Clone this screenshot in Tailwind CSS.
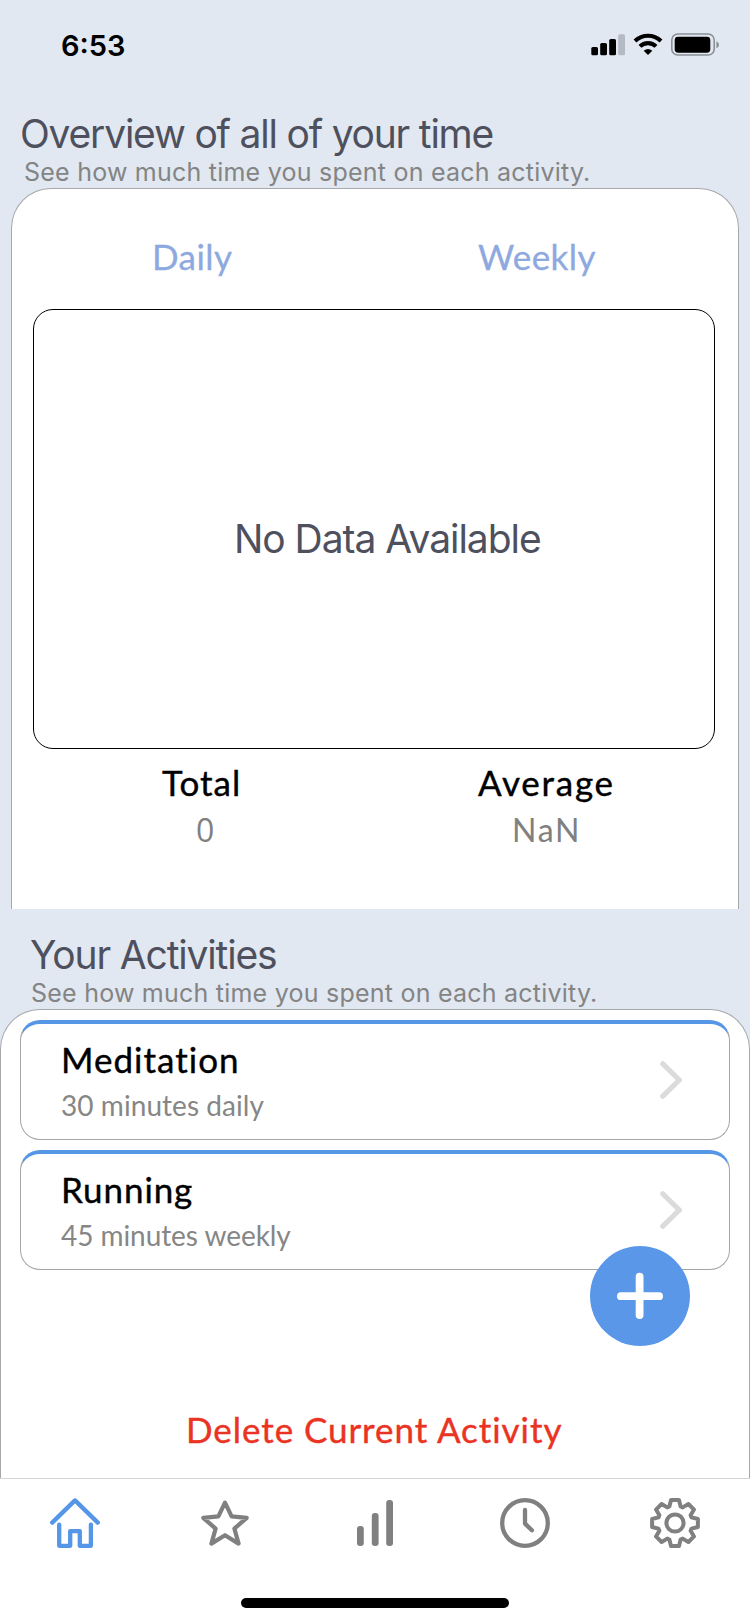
<!DOCTYPE html>
<html lang="en">
<head>
<meta charset="utf-8">
<title>Time overview</title>
<script src="https://cdn.jsdelivr.net/npm/@tailwindcss/browser@4"></script>
</head>
<body class="w-[750px] h-[1624px] overflow-hidden bg-[#e1e8f1] whitespace-nowrap">
<div class="flex flex-col h-[1624px]">

  <!-- Status bar -->
  <header class="h-[110px] shrink-0 flex justify-between items-start pl-[61px] pr-[30px] pt-[30px]">
    <span class="font-['Inter',sans-serif] font-semibold text-[29px] leading-[32px] text-black">6:53</span>
    <svg class="w-[130px] h-[26px] mt-[2px]" viewBox="0 0 130 26" fill="none">
      <rect x="1.3" y="15" width="6.7" height="8.3" rx="1.6" fill="#000"/>
      <rect x="10.2" y="11" width="6.8" height="12.3" rx="1.6" fill="#000"/>
      <rect x="19.2" y="7" width="6.8" height="16.3" rx="1.6" fill="#000"/>
      <rect x="28.2" y="2.2" width="6.8" height="21.1" rx="1.6" fill="#b3bac3"/>
      <path d="M45 9A18.6 18.6 0 0 1 71 9" stroke="#000" stroke-width="4.1"/>
      <path d="M50 14.4A11.3 11.3 0 0 1 66 14.4" stroke="#000" stroke-width="4.1"/>
      <path d="M53.7 18.8Q58 15.4 62.3 18.8L58 23Z" fill="#000"/>
      <rect x="81.8" y="2" width="42.4" height="21" rx="6" stroke="#8b9096" stroke-width="1.6"/>
      <rect x="84.7" y="4.7" width="35.6" height="16" rx="3.4" fill="#000"/>
      <path d="M126.4 9.2Q129 10.2 129 12.7T126.4 16.2Z" fill="#8b9096"/>
    </svg>
  </header>

  <!-- Overview -->
  <section class="h-[799px] shrink-0 flex flex-col">
    <h1 class="pl-[20px] font-['Inter',sans-serif] text-[39px] leading-[47px] tracking-[-1.21px] text-[#4e505d]">Overview of all of your time</h1>
    <p class="pl-[24px] mb-px font-['Inter',sans-serif] text-[25px] leading-[30px] tracking-[0.23px] text-[#848484]">See how much time you spent on each activity.</p>
    <div class="mx-[11px] flex-1 rounded-t-[40px] border border-b-0 border-[#a6a8ab] bg-white pt-[46px] pl-[21px] font-['Lato',sans-serif]">
      <div class="flex text-[35px] leading-[42px] text-[#8da9e0] [-webkit-text-stroke:0.3px]">
        <span class="ml-[119px] w-[326px] tracking-[0.45px]">Daily</span>
        <span class="tracking-[0.45px]">Weekly</span>
      </div>
      <div class="mt-[32px] w-[682px] h-[440px] rounded-[20px] border border-black flex items-start pt-[205px] pl-[200px]">
        <span class="font-['Inter',sans-serif] text-[39px] leading-[48px] tracking-[-1.04px] text-[#4e505d]">No Data Available</span>
      </div>
      <div class="flex mt-[12px] text-[35px] leading-[42px] text-black [-webkit-text-stroke:0.4px]">
        <span class="ml-[129px] w-[316px] tracking-[1.05px]">Total</span>
        <span class="tracking-[1.75px]">Average</span>
      </div>
      <div class="flex mt-[8px] text-[32px] leading-[38px] text-[#808080]">
        <span class="ml-[163px] w-[316px] font-['Open_Sans',sans-serif]">0</span>
        <span class="tracking-[1.73px]">NaN</span>
      </div>
    </div>
  </section>

  <!-- Activities -->
  <section class="relative h-[569px] shrink-0 flex flex-col pt-[22px]">
    <h2 class="pl-[30px] font-['Inter',sans-serif] text-[39px] leading-[47px] tracking-[-1.16px] text-[#4e505d]">Your Activities</h2>
    <p class="pl-[31px] mb-px font-['Inter',sans-serif] text-[25px] leading-[30px] tracking-[0.23px] text-[#848484]">See how much time you spent on each activity.</p>
    <div class="flex-1 rounded-t-[40px] border border-b-0 border-[#a6a8ab] bg-white pt-[10px] px-[19px] font-['Lato',sans-serif]">
      <div class="h-[120px] rounded-[20px] border border-t-4 border-[#a6a6a6] border-t-[#5596e6] flex items-start justify-between pt-[14px] pl-[40px] pr-[46px]">
        <div class="flex flex-col gap-[8px]">
          <span class="text-[35px] leading-[42px] tracking-[1.02px] text-black [-webkit-text-stroke:0.4px]">Meditation</span>
          <span class="text-[28px] leading-[34px] tracking-[0.06px] text-[#868686]">30 minutes daily</span>
        </div>
        <svg class="w-[24px] h-[40px] mt-[22px]" viewBox="0 0 24 40" fill="none" stroke="#dbdbdb" stroke-width="5.2" stroke-linecap="round" stroke-linejoin="round"><path d="M3.8 3.8L20.4 20L3.8 36.2"/></svg>
      </div>
      <div class="mt-[10px] h-[120px] rounded-[20px] border border-t-4 border-[#a6a6a6] border-t-[#5596e6] flex items-start justify-between pt-[14px] pl-[40px] pr-[46px]">
        <div class="flex flex-col gap-[8px]">
          <span class="text-[35px] leading-[42px] tracking-[0.9px] text-black [-webkit-text-stroke:0.4px]">Running</span>
          <span class="text-[28px] leading-[34px] tracking-[-0.06px] text-[#868686]">45 minutes weekly</span>
        </div>
        <svg class="w-[24px] h-[40px] mt-[22px]" viewBox="0 0 24 40" fill="none" stroke="#dbdbdb" stroke-width="5.2" stroke-linecap="round" stroke-linejoin="round"><path d="M3.8 3.8L20.4 20L3.8 36.2"/></svg>
      </div>
      <div class="mt-[138px] pl-[166px] text-[35px] leading-[42px] tracking-[0.94px] text-[#ea3323] [-webkit-text-stroke:0.4px]">Delete Current Activity</div>
    </div>
    <button class="absolute left-[590px] top-[337px] size-[100px] rounded-full bg-[#5a97e8]" aria-label="Add activity">
      <svg class="size-[100px]" viewBox="0 0 100 100" fill="none" stroke="#fff" stroke-width="7.8" stroke-linecap="round"><path d="M49.6 30.6V69.1M30.9 50.2H69.1"/></svg>
    </button>
  </section>

  <!-- Tab bar -->
  <nav class="flex-1 border-t border-[#d5d5d6] bg-white flex flex-col items-center">
    <div class="w-full flex mt-[19px] h-[50px]">
      <div class="flex-1 flex justify-center">
        <svg class="size-[50px]" viewBox="0 0 50 50" fill="none" stroke="#5596e6" stroke-width="4.3" stroke-linecap="round" stroke-linejoin="round"><path d="M2.2 24.6L25 2.4L47.8 24.6"/><path d="M9.2 26.6V47.8H20.2V33.2H29.8V47.8H40.9V26.6"/></svg>
      </div>
      <div class="flex-1 flex justify-center">
        <svg class="size-[50px]" viewBox="0 0 50 50" fill="none" stroke="#808080" stroke-width="4.2" stroke-linecap="round" stroke-linejoin="round"><path d="M25 4.6L31.6 18.4L46.7 19.8L34.4 30.6L38.6 45.6L25 37.2L11.4 45.6L15.6 30.6L3.3 19.8L18.4 18.4Z"/></svg>
      </div>
      <div class="flex-1 flex justify-center">
        <svg class="size-[50px]" viewBox="0 0 50 50" fill="#808080"><rect x="7" y="28" width="6.8" height="20" rx="3"/><rect x="21.8" y="15" width="6.8" height="33" rx="3"/><rect x="36.2" y="2" width="6.8" height="46" rx="3"/></svg>
      </div>
      <div class="flex-1 flex justify-center">
        <svg class="size-[50px]" viewBox="0 0 50 50" fill="none" stroke="#808080" stroke-width="4.3" stroke-linecap="round" stroke-linejoin="round"><circle cx="25" cy="25" r="22.8"/><path d="M25 12V25.6L31.9 32.3"/></svg>
      </div>
      <div class="flex-1 flex justify-center">
        <svg class="size-[50px]" viewBox="-25 -25 50 50" fill="none" stroke="#808080" stroke-width="4" stroke-linecap="round" stroke-linejoin="round"><circle r="8.6"/><path d="M-5.6 -16.5L-4 -22.9H4L5.6 -16.5L7.7 -15.6L13.4 -19L19 -13.4L15.6 -7.7L16.5 -5.6L22.9 -4V4L16.5 5.6L15.6 7.7L19 13.4L13.4 19L7.7 15.6L5.6 16.5L4 22.9H-4L-5.6 16.5L-7.7 15.6L-13.4 19L-19 13.4L-15.6 7.7L-16.5 5.6L-22.9 4V-4L-16.5 -5.6L-15.6 -7.7L-19 -13.4L-13.4 -19L-7.7 -15.6Z"/></svg>
      </div>
    </div>
    <div class="mt-[50px] w-[268px] h-[10px] rounded-full bg-black"></div>
  </nav>
</div>
</body>
</html>
